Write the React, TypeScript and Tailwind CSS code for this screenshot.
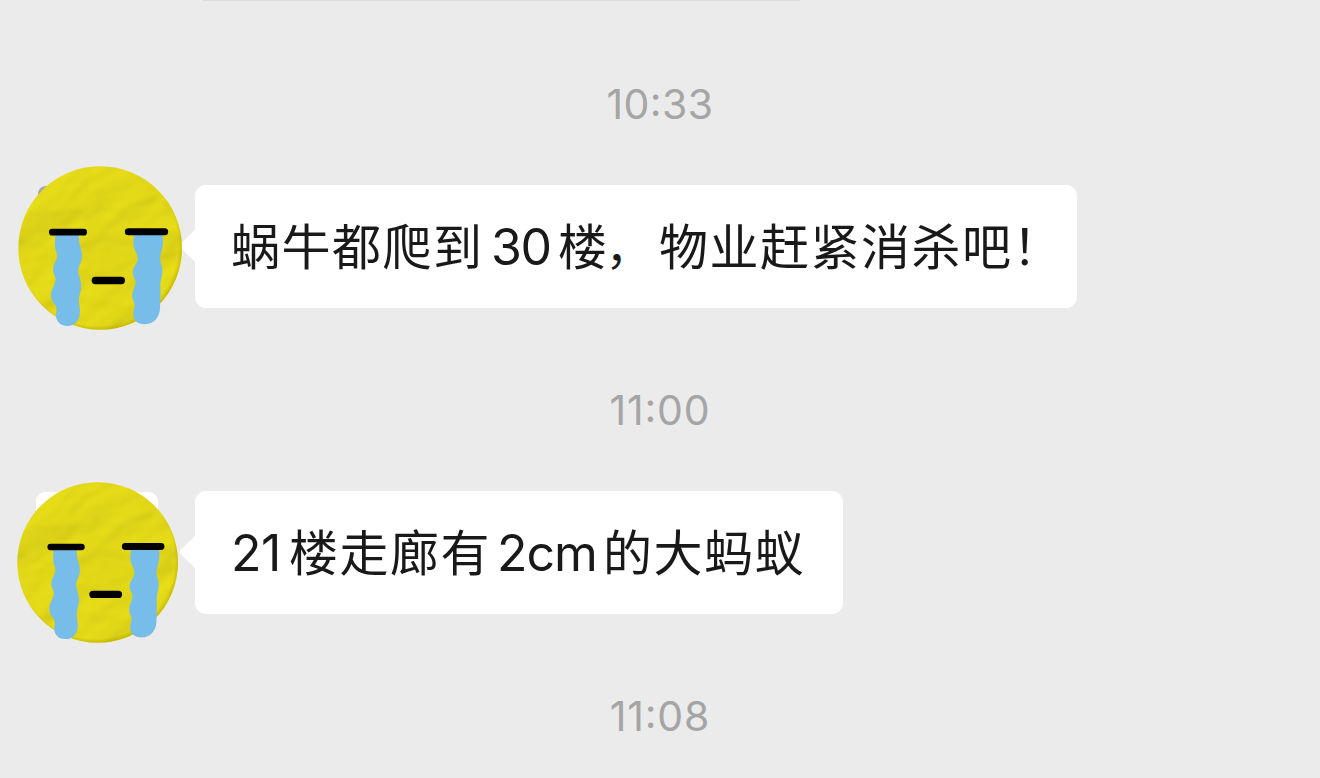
import React from "react";
import type { ReactNode } from "react";

function Timestamp({ hour, minute, className }: { hour: string; minute: string; className: string }) {
  return (
    <div
      className={`flex h-[42px] items-center justify-center pb-1 font-['Inter','Liberation_Sans',sans-serif] text-[41px] leading-[42px] text-[#a5a5a5] ${className}`}
    >
      <span>
        {hour}
        <span className="align-[3px] leading-none">:</span>
        {minute}
      </span>
    </div>
  );
}

function Hanzi({ className = "", children }: { className?: string; children: ReactNode }) {
  return (
    <span
      className={`pb-[5px] font-['Noto_Sans_CJK_SC','Noto_Sans',sans-serif] text-[49px] tracking-[1.5px] ${className}`}
    >
      {children}
    </span>
  );
}

function Latin({ className, children }: { className: string; children: ReactNode }) {
  return <span className={`font-['Inter','Liberation_Sans',sans-serif] ${className}`}>{children}</span>;
}

function CryingFace({ id, className }: { id: string; className: string }) {
  return (
    <svg viewBox="51 45 502 504" className={className} aria-hidden="true">
      <defs>
        <filter id={`${id}-clay`} x="0" y="0" width="100%" height="100%" colorInterpolationFilters="sRGB">
          <feTurbulence type="fractalNoise" baseFrequency="0.006 0.011" numOctaves="3" seed="11" result="n" />
          <feColorMatrix in="n" type="matrix" values="0 0 0 0 0  0 0 0 0 0  0 0 0 0 0  1 0 0 0 0" result="c" />
          <feGaussianBlur in="c" stdDeviation="6" result="h" />
          <feDiffuseLighting in="h" surfaceScale="14" diffuseConstant="1.15" lightingColor="#e2d818">
            <feDistantLight azimuth="250" elevation="60" />
          </feDiffuseLighting>
        </filter>
        <clipPath id={`${id}-disc`}>
          <circle cx="300.5" cy="294" r="245.5" />
        </clipPath>
        <radialGradient id={`${id}-rim`} cx="0.485" cy="0.48" r="0.52">
          <stop offset="0.95" stopColor="#b9a900" stopOpacity="0" />
          <stop offset="1" stopColor="#b9a900" stopOpacity="0.6" />
        </radialGradient>
      </defs>
      <g clipPath={`url(#${id}-disc)`}>
        <rect x="50" y="44" width="502" height="504" fill="#e1d718" />
        <g transform="rotate(-18 300 294)">
          <rect x="-50" y="-56" width="700" height="700" filter={`url(#${id}-clay)`} opacity="0.24" />
        </g>
        <circle cx="300.5" cy="294" r="245.5" fill={`url(#${id}-rim)`} />
      </g>
      <g fill="#76bee9">
        <path d="M166 250H237C235 270 239 284 244 300C249 319 245 333 238 347C232 360 235 371 241 389C246 409 242 426 238 439C234 452 239 466 240 484C240 511 225 528 202 528C178 528 166 511 168 491C171 478 170 469 162 460C151 447 151 431 157 417C163 403 171 389 164 377C157 366 158 350 165 337C174 322 172 313 167 301C162 284 166 268 166 250Z" />
        <path d="M402 250H487C491 270 489 286 485 302C478 321 480 333 485 346C489 365 485 382 482 395C479 407 483 421 481 440L480 477C478 505 459 523 433 523C411 523 398 509 400 489C402 475 407 466 401 455C394 440 397 427 403 412C411 394 405 389 400 377C394 361 403 349 410 338C416 325 412 314 406 303C396 285 402 269 402 250Z" />
      </g>
      <g stroke="#000" strokeLinecap="round" fill="none">
        <path d="M157 246.500H251" strokeWidth="20" />
        <path d="M385 245H494" strokeWidth="21" />
        <path d="M286 391.500H364" strokeWidth="22" />
      </g>
    </svg>
  );
}

function Bubble({ className, children }: { className: string; children: ReactNode }) {
  return (
    <>
      <svg viewBox="0 0 17 36" className="-mr-px ml-auto h-[36px] w-[17px] self-center" aria-hidden="true">
        <path d="M17 0L1.500 15Q-0.500 17 1.500 19L17 34Z" fill="#fff" />
      </svg>
      <div
        className={`flex h-full items-center whitespace-nowrap rounded-[11px] bg-white pl-[36px] text-[50px] leading-[60px] text-[#191919] ${className}`}
      >
        {children}
      </div>
    </>
  );
}

export default function App() {
  return (
    <main className="flex h-[778px] w-[1320px] flex-col overflow-hidden bg-[#ebebeb]">
      <div className="ml-[203px] h-px w-[597px] shrink-0 bg-[#dddddd]" />

      <div className="flex flex-col gap-[82px] pt-[83px]">
        <section className="flex flex-col gap-[59px]">
          <Timestamp hour="10" minute="33" className="tracking-[0.4px]" />
          <div className="flex h-[123px] w-[1077px] items-center">
            <div className="relative z-10 flex h-full w-[179px] shrink-0 pl-[17px]">
              <div className="absolute left-[38px] top-px h-[20px] w-[24px] rounded-tl-[8px] bg-[#a8a8a2]" />
              <div className="absolute left-[38px] top-[100px] h-[21px] w-[24px] rounded-bl-[8px] bg-[#d3d3cd]" />
              <CryingFace id="first" className="z-10 -mt-5 h-[168px] w-[167.33px] shrink-0" />
            </div>
            <Bubble className="w-[882px]">
              <Hanzi className="w-[260px]">蜗牛都爬到</Hanzi>
              <Latin className="w-[67px] tracking-[-1.5px]">30</Latin>
              <Hanzi className="w-[101px]">
                楼<span className="-ml-[3px] align-[1px] text-[46px] leading-none">，</span>
              </Hanzi>
              <Hanzi>物业赶紧消杀吧！</Hanzi>
            </Bubble>
          </div>
        </section>

        <section className="flex flex-col gap-[59px]">
          <Timestamp hour="11" minute="00" className="tracking-[0.8px]" />
          <div className="flex h-[123px] w-[843px] items-center">
            <div className="relative z-10 flex h-full w-[179px] shrink-0 pl-4">
              <div className="absolute left-[36px] top-px h-[122px] w-[122px] rounded-[9px] bg-white" />
              <CryingFace id="second" className="z-10 -mt-2.5 h-[165px] w-[164.3px] shrink-0" />
            </div>
            <Bubble className="w-[648px]">
              <Latin className="w-[58px] tracking-[-0.5px]">21</Latin>
              <Hanzi className="w-[208px]">楼走廊有</Hanzi>
              <Latin className="w-[106px] tracking-[-1px]">2cm</Latin>
              <Hanzi>的大蚂蚁</Hanzi>
            </Bubble>
          </div>
        </section>

        <Timestamp hour="11" minute="08" className="tracking-[0.8px]" />
      </div>
    </main>
  );
}
